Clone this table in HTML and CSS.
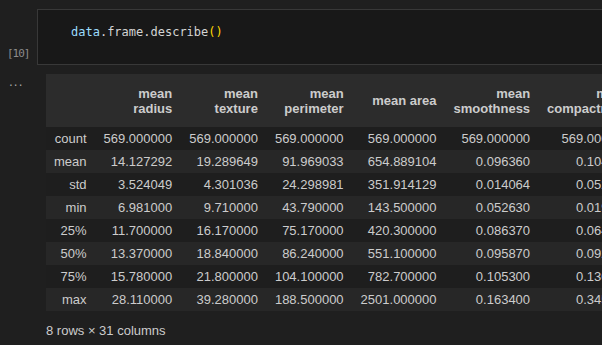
FILE: index.html
```html
<!DOCTYPE html>
<html>
<head>
<meta charset="utf-8">
<link rel="stylesheet" href="styles.css">
</head>
<body>
<div class="notebook">
  <div class="cell">
    <div class="prompt">[10]</div>
    <div class="editor"><code><span class="var">data</span>.frame.describe<span class="paren">()</span></code></div>
  </div>
  <div class="output">
    <div class="more">...</div>
    <div class="out">
      <div class="table-wrap">
        <table class="df">
          <thead>
            <tr><th></th><th>mean radius</th><th>mean texture</th><th>mean perimeter</th><th>mean area</th><th>mean smoothness</th><th>mean compactness</th><th>mean concavity</th></tr>
          </thead>
          <tbody>
            <tr><th>count</th><td>569.000000</td><td>569.000000</td><td>569.000000</td><td>569.000000</td><td>569.000000</td><td>569.000000</td><td>569.000000</td></tr>
            <tr><th>mean</th><td>14.127292</td><td>19.289649</td><td>91.969033</td><td>654.889104</td><td>0.096360</td><td>0.104341</td><td>0.088799</td></tr>
            <tr><th>std</th><td>3.524049</td><td>4.301036</td><td>24.298981</td><td>351.914129</td><td>0.014064</td><td>0.052813</td><td>0.079720</td></tr>
            <tr><th>min</th><td>6.981000</td><td>9.710000</td><td>43.790000</td><td>143.500000</td><td>0.052630</td><td>0.019380</td><td>0.000000</td></tr>
            <tr><th>25%</th><td>11.700000</td><td>16.170000</td><td>75.170000</td><td>420.300000</td><td>0.086370</td><td>0.064920</td><td>0.029560</td></tr>
            <tr><th>50%</th><td>13.370000</td><td>18.840000</td><td>86.240000</td><td>551.100000</td><td>0.095870</td><td>0.092630</td><td>0.061540</td></tr>
            <tr><th>75%</th><td>15.780000</td><td>21.800000</td><td>104.100000</td><td>782.700000</td><td>0.105300</td><td>0.130400</td><td>0.130700</td></tr>
            <tr><th>max</th><td>28.110000</td><td>39.280000</td><td>188.500000</td><td>2501.000000</td><td>0.163400</td><td>0.345400</td><td>0.426800</td></tr>
          </tbody>
        </table>
      </div>
      <p class="shape">8 rows × 31 columns</p>
    </div>
  </div>
</div>
</body>
</html>
```
FILE: styles.css
```css
html, body {
  margin: 0;
  padding: 0;
  background: #1f1f1f;
  overflow: hidden;
}
body {
  width: 602px;
  height: 345px;
}
.notebook {
  padding-top: 9px;
  color: #cccccc;
  font-family: "Liberation Sans", Arial, sans-serif;
}
.cell {
  display: flex;
  align-items: flex-end;
}
.prompt {
  width: 37px;
  flex: none;
  box-sizing: border-box;
  padding-left: 7px;
  padding-bottom: 5px;
  font-family: "DejaVu Sans Mono", "Liberation Mono", monospace;
  font-size: 11px;
  letter-spacing: -1px;
  line-height: 13px;
  color: #8c8c8c;
}
.editor {
  flex: 1;
  margin-right: -20px;
  height: 56px;
  box-sizing: border-box;
  border: 1px solid #383838;
  background: #181818;
  padding: 12px 0 0 33px;
}
.editor code {
  font-family: "DejaVu Sans Mono", "Liberation Mono", monospace;
  font-size: 12px;
  line-height: 18px;
  color: #d4d4d4;
}
.var { color: #9cdcfe; }
.paren { color: #ffd700; }

.output {
  display: flex;
  margin-top: 9px;
}
.more {
  width: 46px;
  flex: none;
  box-sizing: border-box;
  padding-left: 9px;
  padding-top: 3px;
  font-family: "DejaVu Sans", sans-serif;
  font-size: 12px;
  line-height: 10px;
  letter-spacing: 1px;
  color: #a6a6a6;
}
.out {
  flex: 1;
  min-width: 0;
}
.table-wrap {
  overflow: hidden;
}
.df {
  width: min-content;
  border-collapse: collapse;
  border-spacing: 0;
  font-size: 13px;
  line-height: 15px;
  color: #cccccc;
}
.df th, .df td {
  padding: 4px 8.5px;
  text-align: right;
  white-space: normal;
}
.df thead th {
  background: #2c2c2c;
  font-weight: bold;
  padding-top: 11.5px;
  padding-bottom: 11.5px;
  vertical-align: middle;
}
.df tbody th {
  font-weight: normal;
}
.df tbody th:first-child {
  padding-left: 8px;
}
.df tbody tr:nth-child(even) {
  background: #272727;
}
.df tbody tr:nth-child(odd) {
  background: #1e1e1e;
}
.shape {
  margin: 12px 0 0;
  font-size: 13px;
  line-height: 15px;
  color: #cccccc;
}
```
